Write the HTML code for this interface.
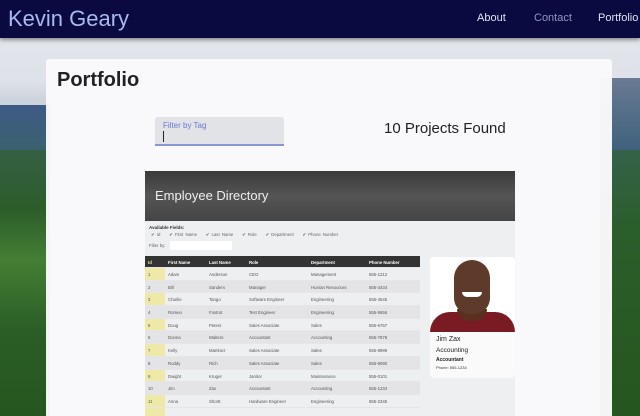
<!DOCTYPE html><html style="overflow:hidden;width:640px;height:416px"><head><style>
*{margin:0;padding:0;box-sizing:border-box}
body{width:640px;height:416px;overflow:hidden;position:relative;font-family:"Liberation Sans",sans-serif;background:linear-gradient(#e4e6ec,#dfe2ea 80px,#cdd3dc 100px)}
.m{position:absolute}
.hdr{position:absolute;left:0;top:0;width:640px;height:38px;background:#0a0940;box-shadow:0 2px 4px rgba(0,0,0,.4);z-index:5}
.hdr .t{position:absolute;left:8px;top:6px;font-size:22px;color:#a8baf0}
.hdr a{position:absolute;top:12px;font-size:11px;color:#dfe4f4;text-decoration:none}
.card{position:absolute;left:46px;top:59px;width:566px;height:357px;background:rgba(250,250,252,.97);border-radius:3px 3px 0 0}
.tbl{position:absolute;left:145px;top:256px;width:275px;font-size:4.3px;color:#555}
.row{height:12.7px;position:relative;border-bottom:1px solid #e6e6e6}
.row span{position:absolute;top:4px}
</style></head><body>
<div class="m" style="left:0;top:105px;width:50px;height:60px;background:linear-gradient(#3e5a86,#3a6468)"></div>
<div class="m" style="left:0;top:150px;width:50px;height:266px;background:linear-gradient(#355f44,#2c5e2a 60px,#457e34 110px,#2a5e26 180px,#26561f)"></div>
<div class="m" style="left:600px;top:78px;width:40px;height:80px;background:linear-gradient(#6a7a94,#3a5f7a)"></div>
<div class="m" style="left:600px;top:150px;width:40px;height:266px;background:linear-gradient(#35624a,#2a5e2a 80px,#26561f)"></div>
<div class="hdr"><div class="t">Kevin Geary</div><a style="left:477px">About</a><a style="left:534px;color:#8d98c2">Contact</a><a style="left:598px">Portfolio</a></div>
<div class="card"></div>
<div class="m" style="left:57px;top:69px;font-size:20px;font-weight:bold;color:#222">Portfolio</div>
<div class="m" style="left:155px;top:117px;width:129px;height:29px;background:#e2e3e6;border-bottom:2px solid #8896d8;border-radius:3px 3px 0 0"></div>
<div class="m" style="left:163px;top:121px;font-size:8px;color:#6a7ad0">Filter by Tag</div>
<div class="m" style="left:163px;top:131px;width:1px;height:11px;background:#222"></div>
<div class="m" style="left:384px;top:120px;font-size:15px;color:#222">10 Projects Found</div>
<div class="m" style="left:145px;top:171px;width:370px;height:245px;background:#eeeff0"></div>
<div class="m" style="left:145px;top:171px;width:370px;height:50px;background:linear-gradient(#3a3a3a,#555 50%,#444)"></div>
<div class="m" style="left:155px;top:188px;font-size:13px;color:#eee">Employee Directory</div>
<div class="m" style="left:149px;top:225px;font-size:4.5px;color:#333;font-weight:bold">Available Fields:</div>
<div class="m" style="left:151px;top:232px;font-size:4.3px;color:#666;word-spacing:1px">✔ Id &nbsp;&nbsp; ✔ First Name &nbsp;&nbsp; ✔ Last Name &nbsp;&nbsp; ✔ Role &nbsp;&nbsp; ✔ Department &nbsp;&nbsp; ✔ Phone Number</div>
<div class="m" style="left:149px;top:243px;font-size:4.3px;color:#666">Filter by:</div>
<div class="m" style="left:170px;top:241px;width:62px;height:9px;background:#fff"></div>
<div class="m" style="left:145px;top:268px;width:20px;height:148px;background:#efe9a8"></div>
<div class="tbl">
<div class="row" style="background:#333;color:#fff;font-weight:bold;height:12px"><span style="left:3px;color:#ee8">Id</span><span style="left:23px">First Name</span><span style="left:64px">Last Name</span><span style="left:104px">Role</span><span style="left:166px">Department</span><span style="left:224px">Phone Number</span></div>
<div class="row"><span style="left:3px">1</span><span style="left:23px">Adam</span><span style="left:64px">Anderson</span><span style="left:104px">CEO</span><span style="left:166px">Management</span><span style="left:224px">555-1212</span></div>
<div class="row" style="background:#e4e4e6"><span style="left:3px">2</span><span style="left:23px">Bill</span><span style="left:64px">Sanders</span><span style="left:104px">Manager</span><span style="left:166px">Human Resources</span><span style="left:224px">555-3434</span></div>
<div class="row"><span style="left:3px">3</span><span style="left:23px">Charlie</span><span style="left:64px">Tango</span><span style="left:104px">Software Engineer</span><span style="left:166px">Engineering</span><span style="left:224px">555-4545</span></div>
<div class="row" style="background:#e4e4e6"><span style="left:3px">4</span><span style="left:23px">Romeo</span><span style="left:64px">Foxtrot</span><span style="left:104px">Test Engineer</span><span style="left:166px">Engineering</span><span style="left:224px">555-5656</span></div>
<div class="row"><span style="left:3px">5</span><span style="left:23px">Doug</span><span style="left:64px">Peters</span><span style="left:104px">Sales Associate</span><span style="left:166px">Sales</span><span style="left:224px">555-6767</span></div>
<div class="row" style="background:#e4e4e6"><span style="left:3px">6</span><span style="left:23px">Donna</span><span style="left:64px">Walters</span><span style="left:104px">Accountant</span><span style="left:166px">Accounting</span><span style="left:224px">555-7878</span></div>
<div class="row"><span style="left:3px">7</span><span style="left:23px">Kelly</span><span style="left:64px">Martinez</span><span style="left:104px">Sales Associate</span><span style="left:166px">Sales</span><span style="left:224px">555-8989</span></div>
<div class="row" style="background:#e4e4e6"><span style="left:3px">8</span><span style="left:23px">Roddy</span><span style="left:64px">Rich</span><span style="left:104px">Sales Associate</span><span style="left:166px">Sales</span><span style="left:224px">555-9090</span></div>
<div class="row"><span style="left:3px">9</span><span style="left:23px">Dwight</span><span style="left:64px">Kruger</span><span style="left:104px">Janitor</span><span style="left:166px">Maintenance</span><span style="left:224px">555-0101</span></div>
<div class="row" style="background:#e4e4e6"><span style="left:3px">10</span><span style="left:23px">Jim</span><span style="left:64px">Zax</span><span style="left:104px">Accountant</span><span style="left:166px">Accounting</span><span style="left:224px">555-1234</span></div>
<div class="row"><span style="left:3px">11</span><span style="left:23px">Anna</span><span style="left:64px">Shortt</span><span style="left:104px">Hardware Engineer</span><span style="left:166px">Engineering</span><span style="left:224px">555-2345</span></div>
</div>
<div class="m" style="left:430px;top:257px;width:85px;height:121px;background:#fafafa;border-radius:4px;overflow:hidden">
<div class="m" style="left:0;top:0;width:85px;height:74px;background:#fff"></div>
<div class="m" style="left:0;top:55px;width:85px;height:20px;background:#7a1a22;border-radius:20px 20px 0 0"></div>
<div class="m" style="left:27px;top:52px;width:30px;height:12px;background:#5a3020;border-radius:0 0 15px 15px"></div>
<div class="m" style="left:24px;top:3px;width:36px;height:54px;background:#5e3a2a;border-radius:18px 18px 16px 16px"></div>
<div class="m" style="left:32px;top:35px;width:20px;height:5px;background:#fff;border-radius:0 0 8px 8px"></div>
<div class="m" style="left:6px;top:79px;font-size:7px;color:#222">Jim Zax</div>
<div class="m" style="left:6px;top:90px;font-size:6.5px;color:#222">Accounting</div>
<div class="m" style="left:6px;top:100px;font-size:5px;color:#222;font-weight:bold">Accountant</div>
<div class="m" style="left:6px;top:108px;font-size:4px;color:#333">Phone: 555-1234</div>
</div>
</body></html>
